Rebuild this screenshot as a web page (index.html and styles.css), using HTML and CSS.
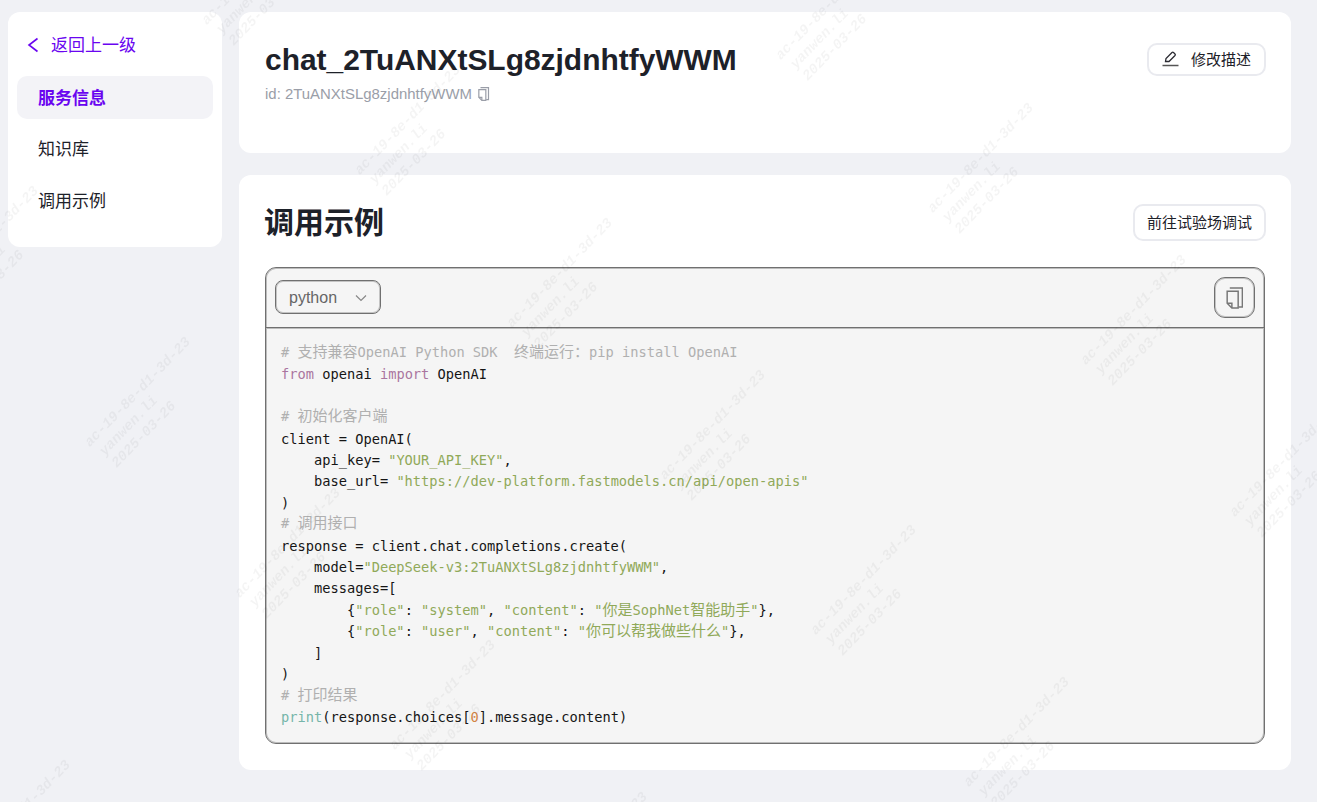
FILE: index.html
```html
<!DOCTYPE html>
<html lang="zh-CN">
<head>
<meta charset="utf-8">
<title>调用示例</title>
<link rel="stylesheet" href="styles.css">
</head>
<body>
<div class="layout">
  <aside class="sidebar">
    <a class="back">
      <svg class="back-icon" viewBox="0 0 12 16"><path d="M10.5 1.5L2 8L10.5 14.5"/></svg>
      <span>返回上一级</span>
    </a>
    <nav class="nav">
      <a class="nav-item active">服务信息</a>
      <a class="nav-item">知识库</a>
      <a class="nav-item">调用示例</a>
    </nav>
  </aside>
  <main class="main">
    <section class="card info">
      <div class="info-text">
        <h1 class="title">chat_2TuANXtSLg8zjdnhtfyWWM</h1>
        <div class="id-row">
          <span>id: 2TuANXtSLg8zjdnhtfyWWM</span>
          <svg class="copy-small" viewBox="0 0 16 21"><path d="M3.5 1H15.5V19H12"/><path d="M1 4H11.5V20H5.5L1 15.5Z"/><path d="M1 15.5H5.5V20"/></svg>
        </div>
      </div>
      <button class="btn btn-edit">
        <svg class="edit-icon" viewBox="0 0 17 17"><path d="M3.5 11.5L4 8.5L10 2.5a1.1 1.1 0 0 1 1.5 0L13 4a1.1 1.1 0 0 1 0 1.5L7 11.5Z"/><path class="under" d="M.5 15.5H16.5"/></svg>
        <span>修改描述</span>
      </button>
    </section>
    <section class="card example">
      <div class="example-head">
        <h2 class="heading">调用示例</h2>
        <button class="btn btn-try">前往试验场调试</button>
      </div>
      <div class="code-box">
        <div class="code-bar">
          <div class="lang-select">
            <span>python</span>
            <svg class="chevron" viewBox="0 0 12 8"><path d="M1 1.5L6 6.5L11 1.5"/></svg>
          </div>
          <button class="copy-btn">
            <svg class="copy-large" viewBox="0 0 16 21"><path d="M3.5 1H15.5V19H12"/><path d="M1 4H11.5V20H5.5L1 15.5Z"/><path d="M1 15.5H5.5V20"/></svg>
          </button>
        </div>
<pre class="code"><span class="c"># <span class="z">支持兼容</span>OpenAI Python SDK  <span class="z">终端运行：</span>pip install OpenAI</span>
<span class="k">from</span> openai <span class="k">import</span> OpenAI

<span class="c"># <span class="z">初始化客户端</span></span>
client = OpenAI(
    api_key= <span class="s">"YOUR_API_KEY"</span>,
    base_url= <span class="s">"https://dev-platform.fastmodels.cn/api/open-apis"</span>
)
<span class="c"># <span class="z">调用接口</span></span>
response = client.chat.completions.create(
    model=<span class="s">"DeepSeek-v3:2TuANXtSLg8zjdnhtfyWWM"</span>,
    messages=[
        {<span class="s">"role"</span>: <span class="s">"system"</span>, <span class="s">"content"</span>: <span class="s">"<span class="z">你是</span>SophNet<span class="z">智能助手</span>"</span>},
        {<span class="s">"role"</span>: <span class="s">"user"</span>, <span class="s">"content"</span>: <span class="s">"<span class="z">你可以帮我做些什么</span>"</span>},
    ]
)
<span class="c"># <span class="z">打印结果</span></span>
<span class="b">print</span>(response.choices[<span class="n">0</span>].message.content)</pre>
      </div>
    </section>
  </main>
</div>
<div class="watermarks" aria-hidden="true">
  <div class="wm w1"><span>ac-19-8e-d1-3d-23</span><span>yanwen.li</span><span>2025-03-26</span></div>
  <div class="wm w2"><span>ac-19-8e-d1-3d-23</span><span>yanwen.li</span><span>2025-03-26</span></div>
  <div class="wm w3"><span>ac-19-8e-d1-3d-23</span><span>yanwen.li</span><span>2025-03-26</span></div>
  <div class="wm w4"><span>ac-19-8e-d1-3d-23</span><span>yanwen.li</span><span>2025-03-26</span></div>
  <div class="wm w5"><span>ac-19-8e-d1-3d-23</span><span>yanwen.li</span><span>2025-03-26</span></div>
  <div class="wm w6"><span>ac-19-8e-d1-3d-23</span><span>yanwen.li</span><span>2025-03-26</span></div>
  <div class="wm w7"><span>ac-19-8e-d1-3d-23</span><span>yanwen.li</span><span>2025-03-26</span></div>
  <div class="wm w8"><span>ac-19-8e-d1-3d-23</span><span>yanwen.li</span><span>2025-03-26</span></div>
  <div class="wm w9"><span>ac-19-8e-d1-3d-23</span><span>yanwen.li</span><span>2025-03-26</span></div>
  <div class="wm w10"><span>ac-19-8e-d1-3d-23</span><span>yanwen.li</span><span>2025-03-26</span></div>
  <div class="wm w11"><span>ac-19-8e-d1-3d-23</span><span>yanwen.li</span><span>2025-03-26</span></div>
  <div class="wm w12"><span>ac-19-8e-d1-3d-23</span><span>yanwen.li</span><span>2025-03-26</span></div>
  <div class="wm w13"><span>ac-19-8e-d1-3d-23</span><span>yanwen.li</span><span>2025-03-26</span></div>
  <div class="wm w14"><span>ac-19-8e-d1-3d-23</span><span>yanwen.li</span><span>2025-03-26</span></div>
  <div class="wm w15"><span>ac-19-8e-d1-3d-23</span><span>yanwen.li</span><span>2025-03-26</span></div>
  <div class="wm w16"><span>ac-19-8e-d1-3d-23</span><span>yanwen.li</span><span>2025-03-26</span></div>
</div>
</body>
</html>
```
FILE: styles.css
```css
* { box-sizing: border-box; }
html, body { margin: 0; height: 100%; }
body {
  background: #f0f1f5;
  color: #1d2129;
  font-family: "Liberation Sans", "Noto Sans CJK SC", sans-serif;
  overflow: hidden;
}
.layout {
  display: flex;
  align-items: flex-start;
  gap: 17px;
  padding: 12px 26px 0 8px;
}
.sidebar {
  width: 214px;
  height: 235px;
  flex: none;
  background: #fff;
  border-radius: 12px;
  padding: 19px 9px 0;
}
.back {
  display: flex;
  align-items: center;
  gap: 12px;
  height: 26px;
  padding: 0 0 2px 10px;
  color: #6a05f0;
  font-size: 17px;
}
.back-icon {
  width: 12px;
  height: 16px;
  margin-top: 3px;
  fill: none;
  stroke: #6a05f0;
  stroke-width: 1.6;
}
.nav {
  display: flex;
  flex-direction: column;
  gap: 8.5px;
  margin-top: 19px;
}
.nav-item {
  display: flex;
  align-items: center;
  height: 43px;
  padding: 0 0 3px 21px;
  border-radius: 10px;
  font-size: 17px;
  color: #1d2129;
}
.nav-item.active {
  background: #f3f3f7;
  color: #6a05f0;
  font-weight: 700;
}
.main {
  flex: 1;
  min-width: 0;
  display: flex;
  flex-direction: column;
  gap: 22px;
}
.card {
  background: #fff;
  border-radius: 12px;
  padding: 0 25px 0 26px;
}
.info {
  height: 141px;
  display: flex;
  justify-content: space-between;
  align-items: flex-start;
  padding-top: 31px;
}
.title {
  margin: 0;
  font-size: 29.95px;
  line-height: 34px;
  font-weight: 700;
  color: #1d2129;
}
.id-row {
  display: flex;
  align-items: center;
  gap: 5px;
  margin-top: 7px;
  font-size: 14.95px;
  line-height: 20px;
  color: #9a9ea8;
}
.copy-small {
  width: 13px;
  height: 14px;
  fill: none;
  stroke: #9a9ea8;
  stroke-width: 1.8;
}
.btn {
  display: flex;
  align-items: center;
  justify-content: center;
  background: #fff;
  border: 2px solid #e9eaef;
  border-radius: 10px;
  color: #1d2129;
  font-family: inherit;
  font-size: 15px;
  padding: 0 0 2px;
}
.btn-edit {
  width: 119px;
  height: 33px;
  gap: 12px;
  flex: none;
}
.edit-icon {
  width: 17px;
  height: 17px;
  fill: none;
  stroke: #2b2b33;
  stroke-width: 1.3;
}
.edit-icon .under { stroke: #555; stroke-width: 1.5; }
.example {
  height: 595px;
  padding-top: 29px;
}
.example-head {
  display: flex;
  justify-content: space-between;
  align-items: center;
  height: 37px;
}
.heading {
  margin: 0 0 0 -1px;
  font-size: 30px;
  line-height: 38px;
  font-weight: 700;
  color: #1d2129;
}
.btn-try {
  width: 133px;
  height: 37px;
}
.code-box {
  margin: 26px 1px 0 0;
  height: 477px;
  background: #f5f5f5;
  border: 1px solid #707070;
  border-radius: 11px;
  box-shadow: inset 0 0 0 1px #bcbcbc;
  overflow: hidden;
}
.code-bar {
  display: flex;
  justify-content: space-between;
  align-items: center;
  height: 60px;
  padding: 1px 9px 0;
  border-bottom: 1px solid #707070;
  box-shadow: 0 1px 0 #bcbcbc;
}
.lang-select {
  display: flex;
  align-items: center;
  justify-content: space-between;
  width: 106px;
  height: 34px;
  margin-top: -2px;
  padding: 2px 13px 0;
  border: 1px solid #707070;
  border-radius: 8px;
  box-shadow: inset 0 0 0 1px #c4c4c4;
  color: #666;
  font-size: 16px;
}
.chevron {
  width: 12px;
  height: 8px;
  fill: none;
  stroke: #888;
  stroke-width: 1.2;
}
.copy-btn {
  display: flex;
  align-items: center;
  justify-content: center;
  width: 41px;
  height: 41px;
  margin-top: -1px;
  background: none;
  border: 1px solid #707070;
  border-radius: 11px;
  box-shadow: inset 0 0 0 1px #c4c4c4;
  padding: 0;
}
.copy-large {
  width: 17px;
  height: 22px;
  fill: none;
  stroke: #777;
  stroke-width: 1.4;
}
.code {
  margin: 0;
  padding: 15px 15px 0;
  font-family: "DejaVu Sans Mono", "Noto Sans CJK SC", monospace;
  font-size: 13.7px;
  line-height: 21.4px;
  color: #151515;
  white-space: pre;
}
.z { font-family: "Noto Sans CJK SC", sans-serif; font-size: 15px; line-height: 1; }
.c { color: #b0b0b0; line-height: 1; vertical-align: 1px; }
.k { color: #aa759f; }
.s { color: #90a959; }
.n { color: #d28445; }
.b { color: #75b5aa; }
.watermarks {
  position: fixed;
  inset: 0;
  overflow: hidden;
  pointer-events: none;
}
.wm {
  position: absolute;
  width: 170px;
  transform: rotate(-46deg);
  transform-origin: 0 0;
  font-family: "Liberation Mono", monospace;
  font-style: italic;
  font-weight: 700;
  font-size: 14.3px;
  line-height: 17px;
  color: rgba(0, 0, 0, 0.045);
}
.wm span { display: block; white-space: nowrap; }
.wm span + span { padding-left: 4px; }
.w1 { left: -71px; top: 288px; }
.w2 { left: 81px; top: 439px; }
.w3 { left: 231px; top: 590px; }
.w4 { left: 386px; top: 742px; }
.w5 { left: 538px; top: 894px; }
.w6 { left: -39px; top: 862px; }
.w7 { left: 198px; top: 17px; }
.w8 { left: 351px; top: 167px; }
.w9 { left: 503px; top: 320px; }
.w10 { left: 656px; top: 472px; }
.w11 { left: 807px; top: 627px; }
.w12 { left: 960px; top: 779px; }
.w13 { left: 772px; top: 52px; }
.w14 { left: 924px; top: 205px; }
.w15 { left: 1077px; top: 357px; }
.w16 { left: 1226px; top: 509px; }
```
